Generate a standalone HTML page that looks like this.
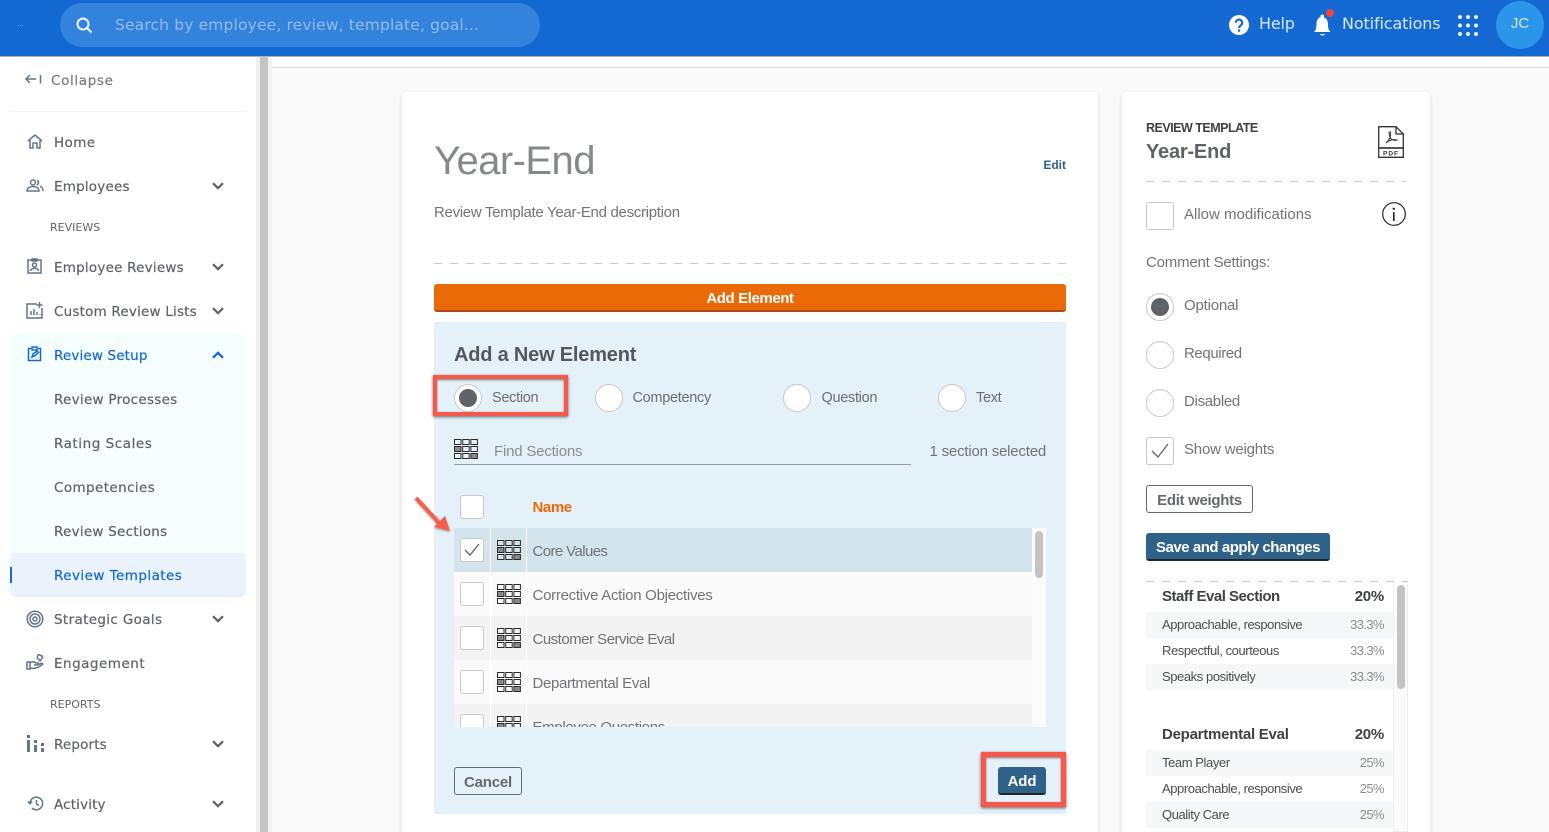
<!DOCTYPE html>
<html lang="en"><head><meta charset="utf-8"><title>Year-End</title>
<style>
html,body{margin:0;padding:0;width:1549px;height:832px;overflow:hidden;background:#fafafa}
body{position:relative;font-family:"Liberation Sans",sans-serif;color:#5f6368}
div,span,svg{position:absolute;box-sizing:border-box}
.t{line-height:20px;white-space:nowrap;margin-top:1px}
.t.z{margin-top:0}
.n{font-family:"DejaVu Sans",sans-serif;font-size:13.5px;color:#5f6368;left:54px;letter-spacing:.15px;-webkit-text-stroke:.2px currentColor}
.h{font-family:"DejaVu Sans",sans-serif;font-size:11px;color:#5f6368;left:50px}
.b{color:#1468d2}
.s{font-size:14.5px;color:#6b6e72;letter-spacing:-.3px}
.m{font-size:15px;color:#707377}
.cb{background:#fff;border:1px solid #c8c8c8;border-radius:3px}
.r{background:#fff;border:1px solid #c8c8c8;border-radius:50%}
.d{width:10px;height:10px;background:#5f6368;border-radius:50%}
.ic{fill:none;stroke:#64748b;stroke-width:1.5}
.ch{fill:none;stroke:#5f6368;stroke-width:2.2}
.dash{height:1px;background:repeating-linear-gradient(90deg,#c9c9c9 0 8px,transparent 8px 16px)}
.row{left:454px;width:578px;height:44px}
.c1{left:490px;top:0;width:1px;height:44px;background:#fff}
.w1{font-size:13px;color:#4a4d50;left:1162px;letter-spacing:-.42px;margin-top:0}
.w2{font-size:13px;color:#8a8d90;right:165px;letter-spacing:-.6px;margin-top:0}
.wb{font-size:15px;font-weight:bold;color:#3f4245;letter-spacing:-.25px}
</style></head><body>
<svg width="0" height="0" style="left:0;top:0"><defs>
<symbol id="g" viewBox="0 0 24 20"><g fill="none" stroke="#2b2b2b" stroke-width="1"><rect x=".5" y=".5" width="6.5" height="5"/><rect x="8.7" y=".5" width="6.500" height="5"/><rect x="16.900" y=".5" width="6.500" height="5"/><rect x="8.700" y="7.500" width="6.500" height="5"/><rect x="16.900" y="7.500" width="6.500" height="5"/><rect x=".5" y="14.500" width="6.500" height="5"/><rect x="8.700" y="14.500" width="6.500" height="5"/></g><rect x=".5" y="7.500" width="6.500" height="5" fill="#8a8a8a" stroke="#2b2b2b"/><rect x="16.900" y="14.500" width="6.500" height="5" fill="#8a8a8a" stroke="#2b2b2b"/></symbol>
<symbol id="dn" viewBox="0 0 12 8"><path class="ch" d="M1 1.200l5 5 5-5"/></symbol>
</defs></svg>

<!-- top bar -->
<div style="left:0;top:0;width:1549px;height:57px;background:#1468d2;border-bottom:1px solid #a9b4c2"></div>
<div style="left:60px;top:3px;width:480px;height:44px;border-radius:22px;background:#3382dc"></div>
<svg style="left:75px;top:16px" width="18" height="18" viewBox="0 0 18 18"><circle cx="8" cy="8" r="5.500" fill="none" stroke="#f0f6ff" stroke-width="2"/><path d="M12 12l4.500 4.500" stroke="#f0f6ff" stroke-width="2"/></svg>
<div class="t z" style="left:115px;top:15px;font-family:'DejaVu Sans',sans-serif;font-size:15.500px;color:#92bdf0;letter-spacing:.15px">Search by employee, review, template, goal...</div>
<div class="t z" style="left:17px;top:14px;color:#8ab4ea;font-size:8px">...</div>
<svg style="left:1229px;top:15px" width="20" height="20" viewBox="0 0 20 20"><circle cx="10" cy="10" r="10" fill="#fff"/><path d="M6.800 7.700a3.200 3.200 0 1 1 5 2.700c-1.200.8-1.700 1.300-1.700 2.600" fill="none" stroke="#1468d2" stroke-width="2.100"/><circle cx="10.100" cy="15.500" r="1.300" fill="#1468d2"/></svg>
<div class="t z" style="left:1259px;top:14px;font-family:'DejaVu Sans',sans-serif;font-size:16px;color:#d7e7fb;letter-spacing:-.2px">Help</div>
<svg style="left:1313px;top:8px" width="22" height="28" viewBox="0 0 22 28"><path d="M1 24c2-2 2.500-4 2.500-8 0-4 2-6.500 4-7V7.500a2 2 0 0 1 3.500 0V9.500c2.500.5 4 3.500 4 7 0 4 .5 5.500 2.500 7.500z" fill="#fff"/><path d="M7 26h5a2.500 1.500 0 0 1-5 0" fill="#fff"/><circle cx="17" cy="5" r="4" fill="#ef4444"/></svg>
<div class="t z" style="left:1342px;top:14px;font-family:'DejaVu Sans',sans-serif;font-size:16px;color:#d7e7fb;letter-spacing:-.13px">Notifications</div>
<svg style="left:1458px;top:15px" width="20" height="21" viewBox="0 0 20 21" fill="#e8f0fb"><circle cx="2" cy="2" r="2"/><circle cx="10" cy="2" r="2"/><circle cx="18" cy="2" r="2"/><circle cx="2" cy="10.500" r="2"/><circle cx="10" cy="10.500" r="2"/><circle cx="18" cy="10.500" r="2"/><circle cx="2" cy="19" r="2"/><circle cx="10" cy="19" r="2"/><circle cx="18" cy="19" r="2"/></svg>
<div style="left:1496px;top:1px;width:48px;height:48px;border-radius:50%;background:#2b95e9"></div>
<div class="t z" style="left:1496px;width:48px;text-align:center;top:14px;font-family:'Liberation Sans',sans-serif;font-size:15px;color:#d7e7fb">JC</div>

<!-- sidebar -->
<div style="left:0;top:57px;width:257px;height:775px;background:#fff"></div>
<div style="left:256px;top:57px;width:4px;height:775px;background:#f0f0f0"></div>
<div style="left:260px;top:57px;width:8px;height:775px;background:#c4c4c4"></div>
<div style="left:268px;top:57px;width:4px;height:775px;background:#f2f2f2"></div>
<div style="left:272px;top:57px;width:1277px;height:11px;background:#fff;border-bottom:1px solid #d8d8d8"></div>

<svg style="left:24px;top:73px" width="18" height="13" viewBox="0 0 18 13"><path d="M12 6H2M6 2L2 6l4 4M16.500 2v8.500" fill="none" stroke="#64748b" stroke-width="1.500"/></svg>
<div class="t n" style="left:51px;top:70px;color:#787b80;letter-spacing:.65px">Collapse</div>
<div style="left:10px;top:111px;width:236px;height:1px;background:#f2f2f2"></div>

<svg style="left:27px;top:134px" width="16" height="15" viewBox="0 0 16 15"><path class="ic" d="M1 7l7-6 7 6M3 6v8h3V9h4v5h3V6"/></svg>
<div class="t n" style="top:132px;letter-spacing:.4px">Home</div>
<svg style="left:26px;top:179px" width="18" height="13" viewBox="0 0 18 13"><circle cx="7" cy="3.500" r="2.500" class="ic"/><path class="ic" d="M1 12c0-6 12-6 12 0zM11 1.500c2 .5 2 3.500 0 4.500M14 7c2 1 3 2.500 3 5"/></svg>
<div class="t n" style="top:176px;letter-spacing:.2px">Employees</div>
<svg style="left:212px;top:182px" width="12" height="8"><use href="#dn"/></svg>
<div class="t h" style="top:217px">REVIEWS</div>
<svg style="left:27px;top:258px" width="16" height="16" viewBox="0 0 16 16"><rect x="1" y="2" width="13" height="13" class="ic"/><path class="ic" d="M5 1h5v2H5z"/><circle cx="7.500" cy="7" r="2" class="ic"/><path class="ic" d="M3.500 13c0-3.500 8-3.500 8 0"/></svg>
<div class="t n" style="top:257px;letter-spacing:.22px">Employee Reviews</div>
<svg style="left:212px;top:263px" width="12" height="8"><use href="#dn"/></svg>
<svg style="left:26px;top:302px" width="18" height="17" viewBox="0 0 18 17"><path class="ic" d="M11 2H1v14h15V6M13.500 0v6M10.500 3h6M5 13V9M8 13V7M11 13v-3M14 13v-1"/></svg>
<div class="t n" style="top:301px;letter-spacing:.2px">Custom Review Lists</div>
<svg style="left:212px;top:307px" width="12" height="8"><use href="#dn"/></svg>

<div style="left:10px;top:333px;width:236px;height:264px;background:#f5feff;border-radius:6px"></div>
<svg style="left:27px;top:346px" width="16" height="16" viewBox="0 0 16 16"><path d="M4 2.500H1.500v12h12v-12H11M5 1h5v3H5zM5 11l1-3 4-3 1.500 1.500-4 3.500z" fill="none" stroke="#1468d2" stroke-width="1.500"/></svg>
<div class="t n b" style="top:345px">Review Setup</div>
<svg style="left:212px;top:351px;transform:rotate(180deg)" width="12" height="8" viewBox="0 0 12 8"><path d="M1 1.200l5 5 5-5" fill="none" stroke="#1468d2" stroke-width="2.200"/></svg>
<div class="t n" style="top:389px;letter-spacing:.28px">Review Processes</div>
<div class="t n" style="top:433px;letter-spacing:.55px">Rating Scales</div>
<div class="t n" style="top:477px;letter-spacing:.4px">Competencies</div>
<div class="t n" style="top:521px;letter-spacing:.25px">Review Sections</div>
<div style="left:10px;top:553px;width:236px;height:44px;background:#eaf2fb;border-radius:6px"></div>
<div style="left:10px;top:567px;width:2px;height:16px;background:#1468d2"></div>
<div class="t n b" style="top:565px;letter-spacing:.45px">Review Templates</div>
<svg style="left:26px;top:610px" width="18" height="18" viewBox="0 0 18 18"><circle cx="9" cy="9" r="7.800" class="ic"/><circle cx="9" cy="9" r="5" class="ic"/><circle cx="9" cy="9" r="2" class="ic"/></svg>
<div class="t n" style="top:609px;letter-spacing:.35px">Strategic Goals</div>
<svg style="left:212px;top:615px" width="12" height="8"><use href="#dn"/></svg>
<svg style="left:26px;top:654px" width="18" height="16" viewBox="0 0 18 16"><path class="ic" d="M1 8h3v7H1zM4 9c3-2 5-1 6 0h2c1 0 1 2-1 2H8M4 14c5 1 8 0 13-4-1-1-3-.5-5 1M12 1c1-1 2.500 0 2 1 1-1 3 0 2.500 1.500L14 7l-2.500-3c-.5-1 0-2 .5-3z"/></svg>
<div class="t n" style="top:653px;letter-spacing:.5px">Engagement</div>
<div class="t h" style="top:694px">REPORTS</div>
<svg style="left:27px;top:735px" width="17" height="18" viewBox="0 0 17 18" fill="#64748b"><rect x="0" y="0" width="3" height="3"/><rect x="0" y="5" width="3" height="12"/><rect x="7" y="5" width="3" height="3"/><rect x="7" y="10" width="3" height="7"/><rect x="14" y="8" width="3" height="3"/><rect x="14" y="13" width="3" height="4"/></svg>
<div class="t n" style="top:734px">Reports</div>
<svg style="left:212px;top:740px" width="12" height="8"><use href="#dn"/></svg>
<svg style="left:27px;top:796px" width="17" height="15" viewBox="0 0 17 15"><path class="ic" d="M3 7.500a6.300 6.300 0 1 1 2 4.600M.8 5.500l2.200 2.200 2.200-2.200M9.500 4v4l2.500 1.500"/></svg>
<div class="t n" style="top:794px">Activity</div>
<svg style="left:212px;top:800px" width="12" height="8"><use href="#dn"/></svg>

<!-- main card -->
<div style="left:402px;top:92px;width:696px;height:760px;background:#fff;border-radius:4px;box-shadow:0 1px 5px rgba(0,0,0,.14)"></div>
<div class="t z" style="left:434px;top:141px;height:40px;line-height:40px;font-size:40px;color:#85888c;font-weight:normal;letter-spacing:-.55px">Year-End</div>
<div class="t z" style="right:483px;top:155px;font-size:12px;font-weight:bold;color:#2f6289">Edit</div>
<div class="t m" style="left:434px;top:202px;letter-spacing:-.3px">Review Template Year-End description</div>
<div class="dash" style="left:434px;top:263px;width:632px"></div>
<div style="left:434px;top:284px;width:632px;height:28px;background:#ea6a08;border-bottom:2px solid #a84b1b;border-radius:3px"></div>
<div class="t" style="left:434px;width:632px;text-align:center;top:288px;font-size:15px;font-weight:bold;color:#fff;letter-spacing:-.4px">Add Element</div>

<div style="left:434px;top:322px;width:632px;height:492px;background:#e4f1f8"></div>
<div class="t" style="left:454px;top:344px;font-size:20px;font-weight:bold;color:#55585c;letter-spacing:-.2px">Add a New Element</div>

<div class="r" style="left:454px;top:384px;width:28px;height:28px"></div>
<div class="d" style="left:459px;top:389px;width:18px;height:18px"></div>
<div class="t s" style="left:492px;top:387px">Section</div>
<div class="r" style="left:595px;top:384px;width:28px;height:28px"></div>
<div class="t s" style="left:632.500px;top:387px">Competency</div>
<div class="r" style="left:783px;top:384px;width:28px;height:28px"></div>
<div class="t s" style="left:821.500px;top:387px">Question</div>
<div class="r" style="left:938px;top:384px;width:28px;height:28px"></div>
<div class="t s" style="left:976px;top:387px">Text</div>
<div style="left:433px;top:375px;width:135px;height:41px;border:4px solid #f9574a;box-shadow:0 1px 3px rgba(0,0,0,.6),inset 0 1px 2px rgba(0,0,0,.5)"></div>

<svg style="left:454px;top:439px" width="24" height="20"><use href="#g"/></svg>
<div class="t m" style="left:494px;top:441px;color:#8b8e91;letter-spacing:-.2px">Find Sections</div>
<div class="t m" style="right:503px;top:441px;letter-spacing:-.2px">1 section selected</div>
<div style="left:454px;top:464px;width:457px;height:1px;background:#9a9da0"></div>

<div class="cb" style="left:460px;top:495px;width:24px;height:24px"></div>
<div class="t" style="left:532.500px;top:497px;font-size:15px;font-weight:bold;color:#ea6a08;letter-spacing:-.4px">Name</div>

<div style="left:454px;top:528px;width:592px;height:199px;overflow:hidden;background:#fafafa">
 <div class="row" style="left:0;top:0;background:#d3e4ed"><div class="c1" style="left:36px"></div><div class="c1" style="left:72px"></div></div>
 <div class="row" style="left:0;top:44px;background:#fafafa"><div class="c1" style="left:36px"></div><div class="c1" style="left:72px"></div></div>
 <div class="row" style="left:0;top:88px;background:#f3f3f3"><div class="c1" style="left:36px"></div><div class="c1" style="left:72px"></div></div>
 <div class="row" style="left:0;top:132px;background:#fafafa"><div class="c1" style="left:36px"></div><div class="c1" style="left:72px"></div></div>
 <div class="row" style="left:0;top:176px;background:#f3f3f3"><div class="c1" style="left:36px"></div><div class="c1" style="left:72px"></div></div>
 <div style="left:578px;top:0;width:14px;height:199px;background:#fbfbfb"></div>
 <div style="left:581px;top:3px;width:8px;height:47px;border-radius:4px;background:#c4c4c4"></div>

 <div class="cb" style="left:6px;top:10px;width:24px;height:24px"></div>
 <svg style="left:10px;top:15px" width="16" height="14" viewBox="0 0 16 14"><path d="M1 7l5 5 9-11" fill="none" stroke="#5f6368" stroke-width="1.300"/></svg>
 <div class="cb" style="left:6px;top:54px;width:24px;height:24px"></div>
 <div class="cb" style="left:6px;top:98px;width:24px;height:24px"></div>
 <div class="cb" style="left:6px;top:142px;width:24px;height:24px"></div>
 <div class="cb" style="left:6px;top:186px;width:24px;height:24px"></div>

 <svg style="left:43px;top:12px" width="24" height="20"><use href="#g"/></svg>
 <svg style="left:43px;top:56px" width="24" height="20"><use href="#g"/></svg>
 <svg style="left:43px;top:100px" width="24" height="20"><use href="#g"/></svg>
 <svg style="left:43px;top:144px" width="24" height="20"><use href="#g"/></svg>
 <svg style="left:43px;top:188px" width="24" height="20"><use href="#g"/></svg>

 <div class="t m" style="left:78.500px;top:13px;letter-spacing:-.6px">Core Values</div>
 <div class="t m" style="left:78.500px;top:57px;letter-spacing:-.27px">Corrective Action Objectives</div>
 <div class="t m" style="left:78.500px;top:101px;letter-spacing:-.5px">Customer Service Eval</div>
 <div class="t m" style="left:78.500px;top:145px;letter-spacing:-.35px">Departmental Eval</div>
 <div class="t m" style="left:78.500px;top:189px;letter-spacing:-.33px">Employee Questions</div>
</div>

<svg style="left:408px;top:490px" width="48" height="46" viewBox="0 0 48 46" style="overflow:visible"><defs><filter id="sh" x="-20%" y="-20%" width="150%" height="150%"><feDropShadow dx="0" dy="1" stdDeviation="1" flood-color="#000" flood-opacity=".4"/></filter></defs><g filter="url(#sh)"><path d="M8 8l27 29" stroke="#f4604f" stroke-width="4" fill="none"/><path d="M42 41l-16-4 11-11z" fill="#f4604f"/></g></svg>

<div style="left:454px;top:767px;width:68px;height:28px;border:1px solid #66696d;border-radius:3px"></div>
<div class="t" style="left:454px;width:68px;text-align:center;top:772px;font-size:15px;font-weight:bold;color:#66696d;letter-spacing:-.2px">Cancel</div>
<div style="left:998px;top:767px;width:48px;height:28px;background:#2f6289;border-bottom:2px solid #1f2428;border-radius:3px"></div>
<div class="t" style="left:998px;width:48px;text-align:center;top:771px;font-size:15px;font-weight:bold;color:#fff;letter-spacing:-.1px">Add</div>
<div style="left:981px;top:752px;width:85px;height:55px;border:5px solid #f9574a;box-shadow:0 1px 3px rgba(0,0,0,.6),inset 0 1px 2px rgba(0,0,0,.5)"></div>

<!-- right card -->
<div style="left:1122px;top:92px;width:308px;height:760px;background:#fff;border-radius:4px;box-shadow:0 1px 5px rgba(0,0,0,.14)"></div>
<div class="t z" style="left:1146px;top:118px;font-size:12.500px;font-weight:bold;color:#3f4245;letter-spacing:-.5px">REVIEW TEMPLATE</div>
<div class="t z" style="left:1146px;top:142px;font-size:20px;font-weight:bold;color:#5f6266;letter-spacing:-.2px">Year-End</div>
<svg style="left:1378px;top:126px" width="26" height="32" viewBox="0 0 26 32"><path d="M.7.700H18L25.300 8v23.300H.7zM18 .7V8h7.300" fill="none" stroke="#333" stroke-width="1.300"/><rect x="1" y="21" width="24" height="2" fill="#555"/><path d="M12 5c1 4 1 7-4 12M8 17c3-3 7-4 11-3-3 1-8 0-8-8" fill="none" stroke="#333" stroke-width="1"/><text x="13" y="29.500" font-size="6.500" font-weight="bold" text-anchor="middle" letter-spacing="1" fill="#333" font-family="Liberation Sans">PDF</text></svg>
<div class="dash" style="left:1146px;top:181px;width:260px"></div>

<div class="cb" style="left:1146px;top:202px;width:28px;height:28px"></div>
<div class="t m" style="left:1184px;top:204px">Allow modifications</div>
<svg style="left:1382px;top:202px" width="24" height="24" viewBox="0 0 24 24"><circle cx="12" cy="12" r="11.300" fill="none" stroke="#222" stroke-width="1.200"/><rect x="11" y="10" width="1.600" height="9" fill="#222"/><circle cx="11.800" cy="6.800" r="1.200" fill="#222"/></svg>
<div class="t m" style="left:1146px;top:252px;letter-spacing:-.2px">Comment Settings:</div>
<div class="r" style="left:1146px;top:293px;width:28px;height:28px"></div>
<div class="d" style="left:1151px;top:298px;width:18px;height:18px"></div>
<div class="t m" style="left:1184px;top:295px;letter-spacing:-.2px">Optional</div>
<div class="r" style="left:1146px;top:341px;width:28px;height:28px"></div>
<div class="t m" style="left:1184px;top:343px;letter-spacing:-.4px">Required</div>
<div class="r" style="left:1146px;top:389px;width:28px;height:28px"></div>
<div class="t m" style="left:1184px;top:391px;letter-spacing:-.3px">Disabled</div>
<div class="cb" style="left:1146px;top:437px;width:28px;height:28px"></div>
<svg style="left:1151px;top:443px" width="18" height="16" viewBox="0 0 18 16"><path d="M1 8l6 6L17 1" fill="none" stroke="#5f6368" stroke-width="1.300"/></svg>
<div class="t m" style="left:1184px;top:439px;letter-spacing:-.2px">Show weights</div>
<div style="left:1146px;top:485px;width:107px;height:28px;border:1px solid #66696d;border-radius:3px"></div>
<div class="t" style="left:1146px;width:107px;text-align:center;top:490px;font-size:15px;font-weight:bold;color:#66696d;letter-spacing:-.3px">Edit weights</div>
<div style="left:1146px;top:533px;width:184px;height:28px;background:#2f6289;border-bottom:2px solid #1f2428;border-radius:3px"></div>
<div class="t" style="left:1146px;width:184px;text-align:center;top:537px;font-size:15px;font-weight:bold;color:#fff;letter-spacing:-.46px">Save and apply changes</div>

<div class="dash" style="left:1146px;top:581px;width:262px"></div>
<div style="left:1393px;top:582px;width:15px;height:250px;background:#fbfbfb;border:1px solid #eee;border-top:none"></div>
<div style="left:1397px;top:585px;width:8px;height:104px;border-radius:4px;background:#c4c4c4"></div>

<div class="t wb" style="left:1162px;top:586px;letter-spacing:-.5px">Staff Eval Section</div>
<div class="t wb" style="right:165px;top:586px">20%</div>
<div style="left:1146px;top:612px;width:247px;height:26px;background:#f6f7f9"></div>
<div class="t w1" style="top:615px">Approachable, responsive</div><div class="t w2" style="top:615px">33.3%</div>
<div class="t w1" style="top:641px">Respectful, courteous</div><div class="t w2" style="top:641px">33.3%</div>
<div style="left:1146px;top:664px;width:247px;height:26px;background:#f6f7f9"></div>
<div class="t w1" style="top:667px">Speaks positively</div><div class="t w2" style="top:667px">33.3%</div>

<div class="t wb" style="left:1162px;top:724px">Departmental Eval</div>
<div class="t wb" style="right:165px;top:724px">20%</div>
<div style="left:1146px;top:750px;width:247px;height:26px;background:#f6f7f9"></div>
<div class="t w1" style="top:753px">Team Player</div><div class="t w2" style="top:753px">25%</div>
<div class="t w1" style="top:779px">Approachable, responsive</div><div class="t w2" style="top:779px">25%</div>
<div style="left:1146px;top:802px;width:247px;height:26px;background:#f6f7f9"></div>
<div class="t w1" style="top:805px">Quality Care</div><div class="t w2" style="top:805px">25%</div>
</body></html>
